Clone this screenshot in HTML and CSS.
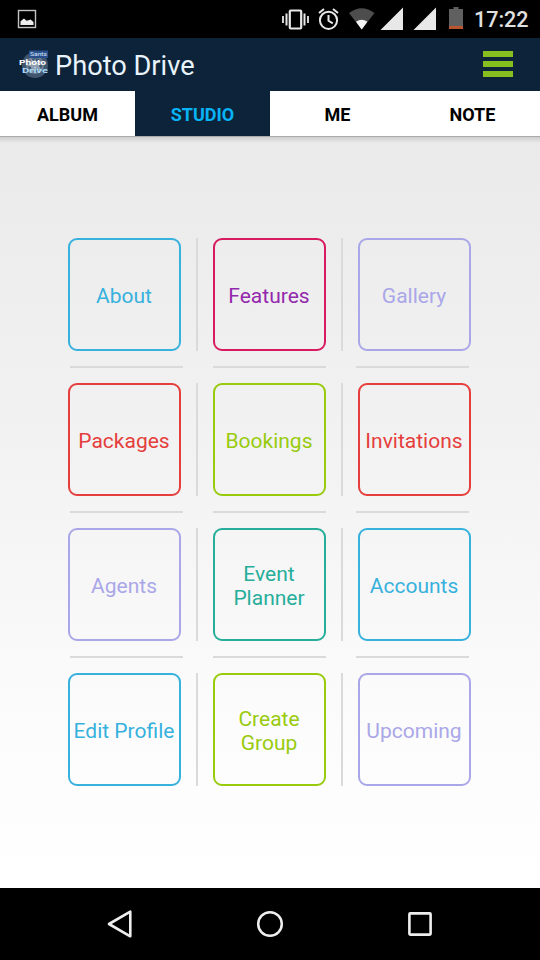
FILE: index.html
```html
<!DOCTYPE html>
<html lang="en">
<head>
  <meta charset="UTF-8">
  <meta name="viewport" content="width=device-width, initial-scale=1.0">
  <title>Photo Drive</title>
  <link rel="stylesheet" href="styles.css">
</head>
<body>
  <div class="status-bar">
    <svg class="picture-icon" width="20" height="20" viewBox="0 0 20 20">
      <rect x="1.5" y="1.5" width="17" height="17" fill="none" stroke="#c4c4c4" stroke-width="1.4"/>
      <path d="M3.5 16v-3.500l1.500-1.500 2-1.600 2.500 2.400 2-0.500 2-0.800 3 2.500v3z" fill="#eee"/>
    </svg>
    <svg class="status-icons" width="190" height="38" viewBox="0 0 190 38">
      <!-- vibrate -->
      <g fill="none" stroke="#e8e8e8">
        <rect x="9.8" y="10.5" width="11.4" height="18" rx="1" stroke-width="2.2"/>
        <path d="M6.5 13.5v12M24.5 13.5v12" stroke-width="2"/>
        <path d="M3 16v7M28 16v7" stroke-width="1.8"/>
      </g>
      <!-- alarm -->
      <g fill="none" stroke="#e8e8e8" stroke-width="2">
        <circle cx="48.5" cy="20.3" r="8.6"/>
        <path d="M48.5 15v5.8l4.3 2.6M39 13l5-4M58 13l-5-4"/>
      </g>
      <!-- wifi -->
      <path d="M81.700 29.500L69 13Q81.700 3.500 94.500 13z" fill="#4d4d4d"/>
      <path d="M81.700 29.500L76 21.800Q81.700 17.500 87.400 21.800z" fill="#f4f4f4"/>
      <!-- signal -->
      <path d="M100.500 30H123V7.500zM133.500 30H156V7.500z" fill="#e8e8e8"/>
      <!-- battery -->
      <path d="M169 9h4.500V7h5v2H183v17h-14z" fill="#606060"/>
      <path d="M169 26h14v3h-14z" fill="#b9562f"/>
    </svg>
    <span class="clock">17:22</span>
  </div>

  <div class="app-bar">
    <svg class="logo" width="32" height="32" viewBox="0 0 32 32">
      <circle cx="17" cy="16" r="13" fill="#40566f"/>
      <circle cx="17" cy="16" r="8" fill="none" stroke="#6d7f94" stroke-width="2"/>
      <path d="M17 9l2 5 5-2-3 5 3 5-6-2-4 4-1-6-5-2 5-2-1-5 4 3z" fill="#8f9fb0"/>
      <rect x="11" y="1.500" width="19" height="7.500" fill="#294f8c"/>
      <text class="logo-small" x="12" y="7.200" textLength="17" lengthAdjust="spacingAndGlyphs">Sants</text>
      <text class="logo-text" x="1" y="15.700" textLength="27" lengthAdjust="spacingAndGlyphs">Photo</text>
      <text class="logo-text logo-blue" x="4" y="23.800" textLength="26" lengthAdjust="spacingAndGlyphs">Drive</text>
    </svg>
    <h1>Photo Drive</h1>
    <div class="menu-btn"><span></span><span></span><span></span></div>
  </div>

  <div class="tabs">
    <div class="tab">ALBUM</div>
    <div class="tab active">STUDIO</div>
    <div class="tab">ME</div>
    <div class="tab">NOTE</div>
  </div>

  <div class="content">
    <div class="tile-row">
      <div class="tile blue">About</div>
      <div class="v-line"></div>
      <div class="tile pink">Features</div>
      <div class="v-line"></div>
      <div class="tile lilac">Gallery</div>
    </div>
    <div class="line-row"><span></span><span></span><span></span></div>
    <div class="tile-row">
      <div class="tile red">Packages</div>
      <div class="v-line"></div>
      <div class="tile green">Bookings</div>
      <div class="v-line"></div>
      <div class="tile red">Invitations</div>
    </div>
    <div class="line-row"><span></span><span></span><span></span></div>
    <div class="tile-row">
      <div class="tile lilac">Agents</div>
      <div class="v-line"></div>
      <div class="tile teal">Event<br>Planner</div>
      <div class="v-line"></div>
      <div class="tile blue">Accounts</div>
    </div>
    <div class="line-row"><span></span><span></span><span></span></div>
    <div class="tile-row">
      <div class="tile blue">Edit Profile</div>
      <div class="v-line"></div>
      <div class="tile green">Create<br>Group</div>
      <div class="v-line"></div>
      <div class="tile lilac">Upcoming</div>
    </div>
  </div>

  <div class="nav-bar">
    <svg width="30" height="32" viewBox="0 0 30 32">
      <path d="M4 16L25.300 3.700v24.600z" fill="none" stroke="#eee" stroke-width="2.600" stroke-linejoin="round"/>
    </svg>
    <svg width="30" height="32" viewBox="0 0 30 32">
      <circle cx="15" cy="16" r="11.800" fill="none" stroke="#eee" stroke-width="2.500"/>
    </svg>
    <svg width="30" height="32" viewBox="0 0 30 32">
      <rect x="4.400" y="5.400" width="21.200" height="21.200" rx="0.800" fill="none" stroke="#eee" stroke-width="2.600"/>
    </svg>
  </div>
</body>
</html>
```
FILE: styles.css
```css
* {
  box-sizing: border-box;
}
body {
  font-family: Roboto, sans-serif;
  margin: 0;
  height: 960px;
  display: flex;
  flex-direction: column;
  overflow: hidden;
}
.status-bar {
  height: 38px;
  background: #000;
  display: flex;
  align-items: center;
  padding: 0 12px 0 17px;
}
.status-icons {
  margin-left: auto;
}
.clock {
  width: 58px;
  padding-left: 4px;
  font-size: 21.5px;
  font-weight: 500;
  color: #e0e0e0;
  white-space: nowrap;
}
.app-bar {
  height: 53px;
  background: #0c233a;
  display: flex;
  align-items: center;
  padding: 0 27px 0 18px;
}
.app-bar h1 {
  margin: 2px 0 0 5px;
  font-size: 27.2px;
  font-weight: 400;
  color: #e9f3fb;
}
.logo-small {
  font-size: 6px;
  fill: #dce8fa;
}
.logo-text {
  font-size: 6.9px;
  font-weight: bold;
  fill: #fff;
}
.logo-blue {
  fill: #a9daf8;
}
.menu-btn {
  margin-left: auto;
  width: 30px;
  display: flex;
  flex-direction: column;
  gap: 4px;
  padding-bottom: 1px;
}
.menu-btn span {
  height: 6px;
  background: #88bf20;
}
.tabs {
  height: 46px;
  display: flex;
  background: #fff;
  border-bottom: 1px solid #aaa;
}
.tab {
  flex: 1;
  display: flex;
  align-items: center;
  justify-content: center;
  padding-top: 2px;
  font-size: 18px;
  font-weight: bold;
  color: #000;
}
.tab.active {
  background: #0c233a;
  color: #08b4f5;
}
.content {
  flex: 1;
  padding-top: 101px;
  background:
    linear-gradient(rgba(0, 0, 0, 0.12), rgba(0, 0, 0, 0)) top / 100% 6px no-repeat,
    linear-gradient(#eaeaea, #f3f3f3 45%, #fbfbfb 75%, #fff);
}
.tile-row {
  display: flex;
  gap: 15px;
  padding-left: 68px;
}
.tile {
  width: 113px;
  height: 113px;
  display: flex;
  align-items: center;
  justify-content: center;
  padding: 2px 1px 0 0;
  border: 2px solid;
  border-radius: 9px;
  font-size: 21px;
  line-height: 24px;
  text-align: center;
  white-space: nowrap;
}
.v-line {
  width: 2px;
  background: #dadada;
}
.line-row {
  display: flex;
  gap: 30px;
  padding: 15px 0 15px 70px;
}
.line-row span {
  width: 113px;
  height: 2px;
  background: #dadada;
}
.blue {
  color: #37b1dd;
}
.pink {
  color: #9428ad;
  border-color: #d81b60;
}
.lilac {
  color: #aaa7e8;
}
.red {
  color: #e53e3c;
}
.green {
  color: #98cb0d;
}
.teal {
  color: #26ae9b;
}
.nav-bar {
  height: 72px;
  background: #000;
  display: flex;
  align-items: center;
  justify-content: center;
  gap: 120px;
}
```
